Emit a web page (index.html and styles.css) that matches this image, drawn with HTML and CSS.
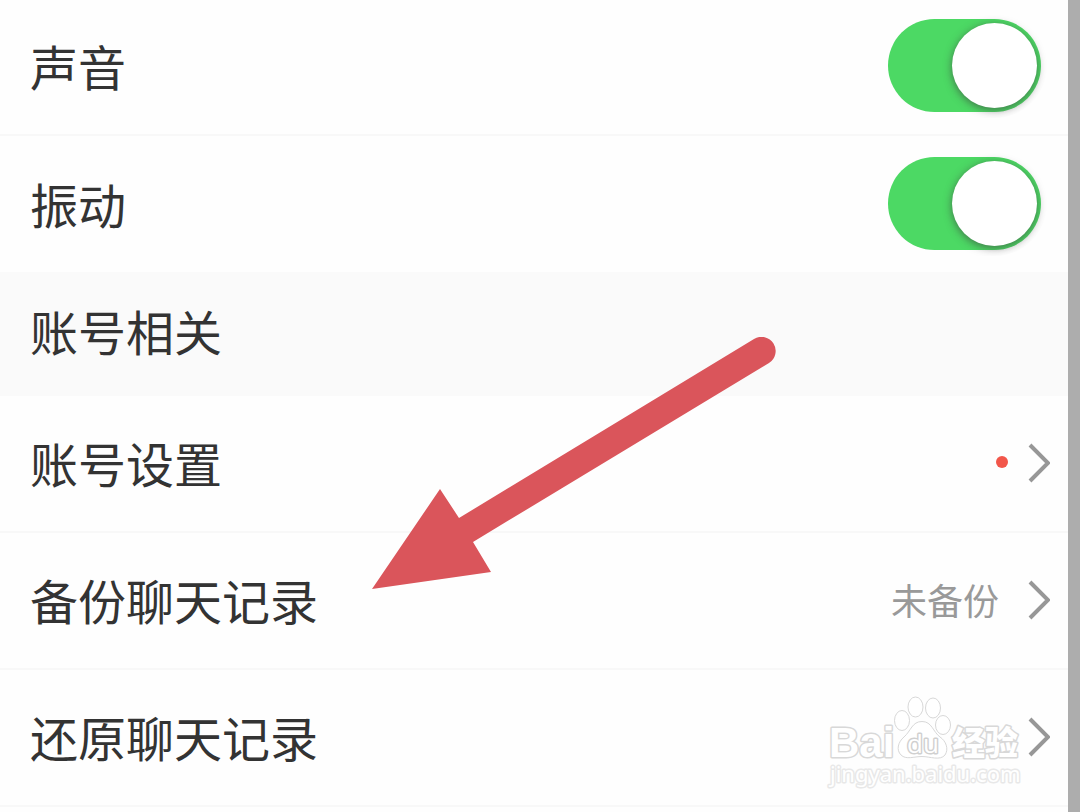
FILE: index.html
```html
<!DOCTYPE html>
<html lang="zh-CN">
<head>
<meta charset="utf-8">
<meta name="viewport" content="width=device-width, initial-scale=1">
<title>账号设置</title>
<link rel="stylesheet" href="styles.css">
</head>
<body>
<main class="settings">
  <section class="group group-switches">
    <div class="row">
      <label class="label" for="sound">声音</label>
      <input class="switch" id="sound" type="checkbox" role="switch" checked>
    </div>
    <div class="row">
      <label class="label" for="vibrate">振动</label>
      <input class="switch" id="vibrate" type="checkbox" role="switch" checked>
    </div>
  </section>
  <h2 class="heading">账号相关</h2>
  <nav class="group">
    <a class="row" href="#account">
      <span class="label">账号设置</span>
      <span class="dot"></span>
      <svg class="chevron" viewBox="0 0 22 40" aria-hidden="true"><path d="M2 2 20 20 2 38"/></svg>
    </a>
    <a class="row" href="#backup">
      <span class="label">备份聊天记录</span>
      <span class="status">未备份</span>
      <svg class="chevron" viewBox="0 0 22 40" aria-hidden="true"><path d="M2 2 20 20 2 38"/></svg>
    </a>
    <a class="row" href="#restore">
      <span class="label">还原聊天记录</span>
      <svg class="chevron" viewBox="0 0 22 40" aria-hidden="true"><path d="M2 2 20 20 2 38"/></svg>
    </a>
  </nav>
  <svg class="arrow" viewBox="0 0 404 253" aria-hidden="true">
    <path d="M0 252 68 152 87 181 382 2A14 14 0 0 1 397 26L101 205 119 235Z"/>
  </svg>
  <svg class="watermark" viewBox="0 0 200 100" aria-hidden="true">
    <text class="brand" x="1" y="60">Bai</text>
    <g class="paw">
      <ellipse cx="74" cy="23.500" rx="7.500" ry="10"/>
      <ellipse cx="87.500" cy="10" rx="7.500" ry="10"/>
      <ellipse cx="105" cy="11" rx="7.500" ry="10"/>
      <ellipse cx="115" cy="28" rx="7.500" ry="9.500"/>
      <path d="M94 24.500C84 24.500 83 34 76 40C70 45 68 53 73 58C78 63 86 59.500 94 59.500S112 64 117 58C121 52 118 44 112 40C105 35 104 24.500 94 24.500Z"/>
    </g>
    <text class="du" x="79" y="56">du</text>
    <text class="cjk" x="124" y="58">经验</text>
    <text class="site" x="2" y="85">jingyan.baidu.com</text>
  </svg>
</main>
</body>
</html>
```
FILE: styles.css
```css
* {
  box-sizing: border-box;
}

body {
  margin: 0;
  background: #fefefe;
  color: #333;
  font-family: "Noto Sans CJK SC", sans-serif;
  overflow: hidden;
}

.settings {
  display: flow-root;
  position: relative;
  min-height: 100vh;
  border-right: 12px solid #adadad;
}

.group-switches {
  margin-top: -2px;
}

.row {
  display: flex;
  align-items: center;
  height: 137px;
  padding: 0 18px 0 30px;
  border-bottom: 2px solid #f8f8f8;
  color: inherit;
  text-decoration: none;
}

.group-switches .row {
  height: 138px;
  padding-right: 27px;
}

.group-switches .row:last-child {
  border-bottom-color: #fafafa;
}

.label {
  flex: 1;
  padding-bottom: 4px;
  font-size: 48px;
  line-height: 72px;
}

.group-switches .label {
  padding-bottom: 2px;
}

.heading {
  margin: 0;
  padding: 20px 30px 30px;
  background: #fafafa;
  font-size: 48px;
  font-weight: 400;
  line-height: 72px;
}

.switch {
  appearance: none;
  display: flex;
  justify-content: flex-end;
  width: 153px;
  height: 93px;
  margin: 0 0 2px;
  padding: 4px;
  border-radius: 47px;
  background: #4cd964;
  overflow: clip;
  overflow-clip-margin: 6px;
}

.switch::before {
  content: "";
  width: 85px;
  height: 85px;
  border-radius: 50%;
  background: #fff;
  box-shadow: 0 2px 9px rgba(60, 60, 60, 0.65);
}

.switch:not(:checked) {
  justify-content: flex-start;
  background: #ddd;
}

.dot {
  width: 12px;
  height: 12px;
  margin: 0 20px 4px 0;
  border-radius: 50%;
  background: #f2564a;
}

.status {
  margin-right: 29px;
  padding-bottom: 4px;
  color: #999;
  font-size: 36px;
  line-height: 54px;
}

.chevron {
  width: 22px;
  height: 40px;
  margin-bottom: 2px;
  fill: none;
  stroke: #979797;
  stroke-width: 4;
}

.arrow {
  position: absolute;
  top: 337px;
  left: 372px;
  width: 404px;
  height: 253px;
  fill: #da555b;
  pointer-events: none;
}

.watermark {
  position: absolute;
  top: 697px;
  right: 40px;
  width: 200px;
  height: 100px;
  overflow: visible;
  fill: #fff;
  stroke: #d8d8d8;
  stroke-width: 1;
  pointer-events: none;
}

.watermark text {
  paint-order: stroke;
  stroke-width: 3;
  stroke-linejoin: round;
}

.brand {
  font: 700 42px "Liberation Sans", sans-serif;
}

.watermark .du {
  font: 400 26px "Open Sans", sans-serif;
  stroke: #d0d0d0;
}

.cjk {
  font: 900 33px "Noto Sans CJK SC", sans-serif;
}

.watermark .site {
  font: 400 22px "Noto Sans", sans-serif;
  stroke: #e8e8e8;
}
```
